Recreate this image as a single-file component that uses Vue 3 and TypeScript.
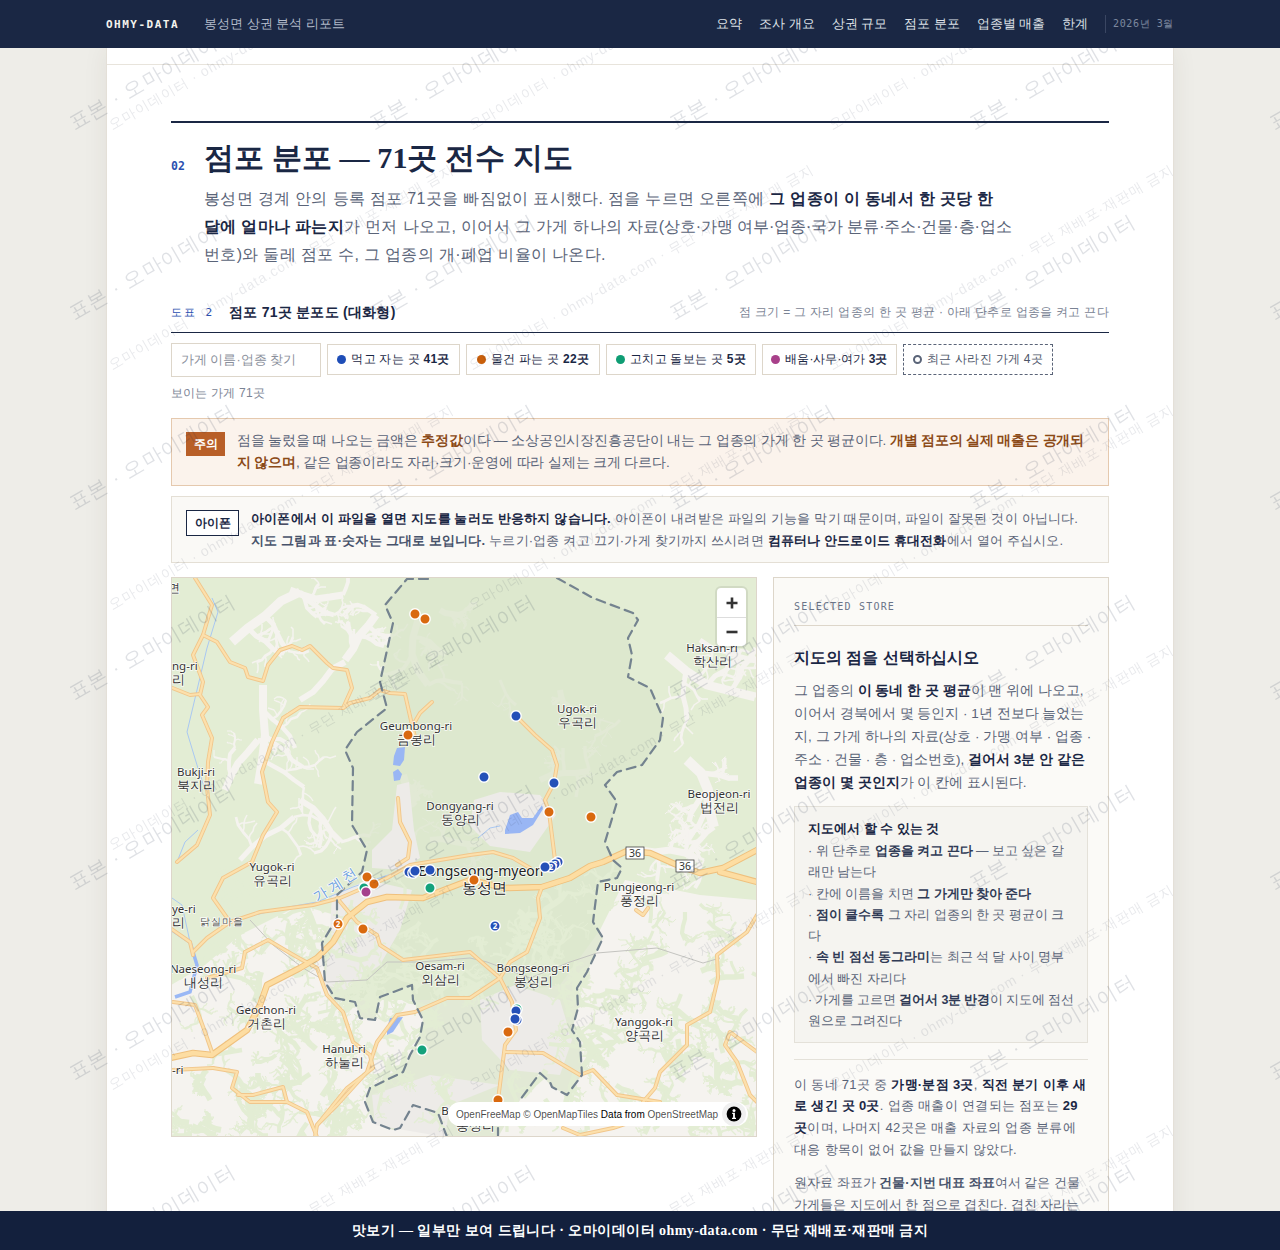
<script setup lang="ts">
interface Chip {
  label: string
  count: string
  tone: string
}

interface Label {
  x: number
  y: number
  en?: string
  ko?: string
  anchor?: string
}

interface Streak {
  d: string
  w: number
}

const navItems = ['요약', '조사 개요', '상권 규모', '점포 분포', '업종별 매출', '한계']

const chips: Chip[] = [
  { label: '먹고 자는 곳', count: '41곳', tone: 'blue' },
  { label: '물건 파는 곳', count: '22곳', tone: 'orange' },
  { label: '고치고 돌보는 곳', count: '5곳', tone: 'green' },
  { label: '배움·사무·여가', count: '3곳', tone: 'purple' }
]

// map geometry is in page pixels, the svg viewBox starts at the map's corner
const minorRoads = [
  '195,578 212,605 203,635 193,655 203,682 200,695 208,707 202,715 212,738 208,762 207,788 210,815 197,845 177,862',
  '203,635 217,642 230,662 245,668 248,677 263,681 268,665 280,650 292,646 302,650 310,646 327,663 333,668 347,670 352,688 343,708',
  '380,690 370,698 350,703 343,708 300,707 283,718 272,742 262,772 268,802 277,812 263,835 252,862 223,878 213,898 230,922',
  '380,690 390,693 405,694 412,725 415,737',
  '432,702 420,713 413,725',
  '398,798 400,822 410,842 408,858 397,865',
  '170,687 190,695 200,694',
  '193,952 207,938 230,922 260,912 313,905 340,898 387,878 410,865 470,855 493,852 513,858 530,868',
  '170,928 190,942 193,955',
  '213,1055 205,1032 195,1005 173,1002',
  '245,952 268,940 290,953 297,957 317,968 327,995 343,1012 353,1042 370,1055 373,1068 347,1088 317,1125 315,1137',
  '245,952 242,968 207,978',
  '213,1068 237,1072 232,1088 250,1102 287,1102 283,1087 253,1095 238,1095',
  '287,1102 307,1112 317,1137',
  '337,898 357,922 377,935 380,945 403,960 470,952 500,978 512,1002 516,1030 505,1045 498,1100',
  '500,978 470,998 447,998 415,1012 397,1015 377,1042 367,1072 337,1105 317,1125',
  '542,887 538,898 540,918 527,952 510,962 500,978',
  '505,1052 543,1053 580,1075 593,1070 617,1095 660,1102',
  '757,915 747,932 717,955 718,978 710,1012 687,1025 687,1045 660,1072 655,1088 643,1102',
  '757,1052 730,1032 725,1045 737,1062 750,1095 757,1102',
  '636,910 643,915 648,908',
  '563,1128 580,1135 613,1128 643,1118',
  '516,716 535,735 552,750 557,765 554,783 545,800 549,812 555,860',
  '170,1070 213,1068'
]

const majorRoads = [
  '170,1058 193,1053 212,1055 247,1030 260,1005 267,985 300,968 317,958 333,942 347,918 367,902 387,897 423,898 470,880 505,888 542,887 570,878 590,866 603,862 627,851 650,853 677,865 700,873 723,868 757,850',
  '720,872 757,882'
]

const boundaries = [
  '428,579 407,579 385,605 393,623 380,682 387,708 357,732 345,750 353,768 352,825 367,850 362,872 337,895 337,918 322,943 325,982 335,998 355,1002 360,1018 375,1020 380,997 412,985 413,1000 423,1020 420,1037 410,1055 403,1072 370,1088 365,1102 373,1122 393,1130 400,1128 413,1105 438,1113 447,1137',
  '557,578 593,598 633,613 638,620 628,638 632,655 628,677 650,688 663,718 660,740 642,765 617,772 605,785 617,802 605,842 613,860 622,868 617,878 598,882 593,922 603,938 587,972 577,988 578,1008 572,1030 580,1042 582,1075 567,1095 552,1087 550,1082 540,1073 520,1100',
  '498,1128 498,1137'
]

const interior =
  '407,577 385,605 393,623 380,682 387,708 357,732 345,750 353,768 352,825 367,850 362,872 337,895 337,918 322,943 325,982 335,998 355,1002 360,1018 375,1020 380,997 412,985 413,1000 423,1020 420,1037 410,1055 403,1072 370,1088 365,1102 373,1122 393,1130 400,1128 413,1105 438,1113 447,1137 498,1137 520,1100 540,1073 552,1087 567,1095 582,1075 580,1042 572,1030 578,1008 577,988 587,972 603,938 593,922 598,882 617,878 622,868 613,860 605,842 617,802 605,785 617,772 642,765 660,740 663,718 650,688 628,677 632,655 628,638 638,620 633,613 593,598 557,577'

const southLand =
  '171,985 205,965 240,935 300,905 335,915 345,1000 460,1000 560,985 600,930 625,880 700,895 757,900 757,1137 171,1137'

const greyLand = [
  '397,785 409,782 414,830 420,858 402,870 372,868 372,850 392,830',
  '474,800 500,792 540,795 556,815 530,852 490,846 470,826',
  '332,895 368,880 412,890 400,930 380,965 345,990 325,985 330,930',
  '480,1000 515,985 560,1000 572,1040 560,1075 510,1070 482,1040',
  '372,1095 430,1075 500,1085 450,1105 445,1137 375,1125'
]

const lakes = [
  '394,756 397,748 405,747 404,760 400,766 393,765',
  '393,772 398,769 402,774 400,780 394,781',
  '505,830 510,815 518,812 522,818 533,818 542,805 543,809 533,825 520,833 505,834',
  '387,1028 390,1018 403,1017 393,1032 387,1035'
]

const streams = [
  '212,598 218,612 207,648 187,732 197,765 205,790',
  '177,862 185,842 198,830',
  '247,917 283,908 317,902 353,887 403,870',
  '478,838 490,828 500,826',
  '172,898 182,905 190,942'
]

const placeLabels: Label[] = [
  { x: 712, y: 652, en: 'Haksan-ri', ko: '학산리' },
  { x: 577, y: 713, en: 'Ugok-ri', ko: '우곡리' },
  { x: 416, y: 730, en: 'Geumbong-ri', ko: '금봉리' },
  { x: 196, y: 776, en: 'Bukji-ri', ko: '북지리' },
  { x: 460, y: 810, en: 'Dongyang-ri', ko: '동양리' },
  { x: 719, y: 798, en: 'Beopjeon-ri', ko: '법전리' },
  { x: 272, y: 871, en: 'Yugok-ri', ko: '유곡리' },
  { x: 639, y: 891, en: 'Pungjeong-ri', ko: '풍정리' },
  { x: 203, y: 973, en: 'Naeseong-ri', ko: '내성리' },
  { x: 266, y: 1014, en: 'Geochon-ri', ko: '거촌리' },
  { x: 440, y: 970, en: 'Oesam-ri', ko: '외삼리' },
  { x: 533, y: 972, en: 'Bongseong-ri', ko: '봉성리' },
  { x: 344, y: 1053, en: 'Hanul-ri', ko: '하눌리' },
  { x: 644, y: 1026, en: 'Yanggok-ri', ko: '양곡리' },
  { x: 172, y: 670, en: 'ng-ri', ko: '리', anchor: 'start' },
  { x: 172, y: 913, en: 'ye-ri', ko: '리', anchor: 'start' },
  { x: 172, y: 1074, en: '-ri', anchor: 'start' }
]

const markers = [
  { x: 415, y: 614, c: 'orange' }, { x: 425, y: 619, c: 'orange' }, { x: 408, y: 735, c: 'orange' },
  { x: 549, y: 812, c: 'orange' }, { x: 591, y: 817, c: 'orange' }, { x: 516, y: 716, c: 'blue' },
  { x: 484, y: 777, c: 'blue' }, { x: 554, y: 783, c: 'blue' }, { x: 364, y: 888, c: 'green' },
  { x: 367, y: 877, c: 'orange' }, { x: 374, y: 884, c: 'orange' }, { x: 366, y: 892, c: 'purple' },
  { x: 338, y: 924, c: 'orange', n: '2' }, { x: 363, y: 929, c: 'orange' }, { x: 409, y: 872, c: 'blue' },
  { x: 413, y: 873, c: 'blue' }, { x: 415, y: 871, c: 'blue' }, { x: 430, y: 870, c: 'blue' },
  { x: 430, y: 888, c: 'green' }, { x: 474, y: 880, c: 'orange' }, { x: 558, y: 862, c: 'blue', n: '2' },
  { x: 555, y: 864, c: 'blue', n: '3' }, { x: 551, y: 867, c: 'blue', n: '2' }, { x: 545, y: 867, c: 'blue' },
  { x: 495, y: 926, c: 'blue', n: '2' }, { x: 517, y: 1009, c: 'green' }, { x: 516, y: 1011, c: 'blue' },
  { x: 517, y: 1020, c: 'blue' }, { x: 515, y: 1019, c: 'blue' }, { x: 508, y: 1032, c: 'orange' },
  { x: 422, y: 1050, c: 'green' }, { x: 498, y: 1100, c: 'orange' }
]

function makeRandom(seed: number) {
  let s = seed
  return () => {
    s = (s + 0x6d2b79f5) | 0
    let t = Math.imul(s ^ (s >>> 15), 1 | s)
    t = (t + Math.imul(t ^ (t >>> 7), 61 | t)) ^ t
    return ((t ^ (t >>> 14)) >>> 0) / 4294967296
  }
}

// the valleys and forest patches branch the way the terrain layer does
function grow(
  rand: () => number, out: Streak[], x: number, y: number, a: number, len: number, w: number
) {
  let px = x
  let py = y
  let d = `M${x.toFixed(0)} ${y.toFixed(0)}`
  const steps = 4
  for (let i = 0; i < steps; i++) {
    a += (rand() - 0.5) * 0.9
    px += Math.cos(a) * (len / steps)
    py += Math.sin(a) * (len / steps)
    d += `L${px.toFixed(0)} ${py.toFixed(0)}`
    if (w > 1.6 && rand() > 0.3) {
      const side = rand() > 0.5 ? 1 : -1
      grow(rand, out, px, py, a + side * (0.7 + rand() * 0.7), len * 0.5, w * 0.55)
    }
  }
  out.push({ d, w: Math.max(1, w) })
}

function northValleys(): Streak[] {
  const rand = makeRandom(11)
  const out: Streak[] = []
  const roots = [
    [232, 642, -0.7, 85, 9], [290, 590, 0.5, 55, 7], [263, 685, 2.0, 100, 8], [345, 660, -0.9, 55, 8],
    [300, 700, -0.2, 60, 6], [225, 790, -1.0, 60, 7], [300, 800, 0.8, 60, 6], [240, 860, -0.4, 70, 5],
    [667, 655, 0.5, 100, 9], [687, 760, 0.4, 75, 10], [640, 850, -0.2, 60, 7], [700, 640, 0.3, 60, 5],
    [420, 640, 0.2, 30, 5], [440, 610, 0.3, 25, 6], [560, 690, 1.7, 25, 6], [540, 780, -0.4, 50, 6],
    [430, 840, -0.3, 50, 6], [620, 720, 1.9, 30, 3], [500, 680, 1.0, 30, 3], [390, 860, -0.8, 40, 3],
    [418, 620, 1.55, 70, 7], [403, 775, 1.55, 30, 8]
  ]
  for (const [x, y, a, len, w] of roots) grow(rand, out, x, y, a, len, w)
  return out
}

function southForest(): Streak[] {
  const rand = makeRandom(29)
  const out: Streak[] = []
  for (let i = 0; i < 230; i++) {
    const x = 171 + rand() * 586
    const y = 900 + rand() * 237
    if (x > 470 && x < 570 && y > 985 && y < 1070) continue
    if (x > 372 && x < 447 && y > 1085) continue
    grow(rand, out, x, y, rand() * 6.28, 16 + rand() * 22, 3 + rand() * 3.5)
  }
  return out
}

const valleys = northValleys()
const forest = southForest()

const notes = [
  { id: 'a', plain: ' 위 단추로 ', bold: '업종을 켜고 끈다', tail: ' — 보고 싶은 갈래만 남는다' },
  { id: 'b', plain: ' 칸에 이름을 치면 ', bold: '그 가게만 찾아 준다', tail: '' },
  { id: 'c', plain: ' ', bold: '점이 클수록', tail: ' 그 자리 업종의 한 곳 평균이 크다' },
  { id: 'd', plain: ' ', bold: '속 빈 점선 동그라미', tail: '는 최근 석 달 사이 명부에서 빠진 자리다' },
  { id: 'e', plain: ' 가게를 고르면 ', bold: '걸어서 3분 반경', tail: '이 지도에 점선 원으로 그려진다' }
]
</script>

<template>
  <div class="page">
    <header class="topbar">
      <div class="topbar-inner">
        <div class="brand">
          <span class="logo">OHMY-DATA</span>
          <span class="report">봉성면 상권 분석 리포트</span>
        </div>
        <nav class="nav">
          <a v-for="item in navItems" :key="item">{{ item }}</a>
          <span class="date">2026년 3월</span>
        </nav>
      </div>
    </header>

    <main class="sheet">
      <div class="sheet-top"></div>
      <section class="section">
        <div class="section-head">
          <span class="section-no">02</span>
          <h2>점포 분포 — 71곳 전수 지도</h2>
        </div>
        <p class="lead">
          봉성면 경계 안의 등록 점포 71곳을 빠짐없이 표시했다. 점을 누르면 오른쪽에
          <strong>그 업종이 이 동네서 한 곳당 한 달에 얼마나 파는지</strong>가 먼저 나오고, 이어서 그 가게 하나의
          <span class="tight">자료(상호·가맹 여부·업종·국가 분류·주소·건물·층·업소</span>번호)와 둘레 점포 수, 그 업종의 개·폐업 비율이 나온다.
        </p>

        <div class="figure-cap">
          <span class="figure-no">도표 2</span>
          <strong>점포 71곳 분포도 (대화형)</strong>
          <span class="figure-note">점 크기 = 그 자리 업종의 한 곳 평균 · 아래 단추로 업종을 켜고 끈다</span>
        </div>

        <div class="controls">
          <input class="search" type="text" placeholder="가게 이름·업종 찾기" />
          <button v-for="chip in chips" :key="chip.tone" class="chip" type="button">
            <i class="dot" :class="chip.tone"></i>
            <span>{{ chip.label }} <b>{{ chip.count }}</b></span>
          </button>
          <button class="chip chip-closed" type="button">
            <i class="ring"></i>
            <span>최근 사라진 가게 4곳</span>
          </button>
        </div>
        <p class="visible">보이는 가게 71곳</p>

        <div class="notice notice-warn">
          <span class="tag tag-warn">주의</span>
          <p>
            점을 눌렀을 때 나오는 금액은 <em>추정값</em>이다 — 소상공인시장진흥공단이 내는 그 업종의 가게 한 곳 평균이다.
            <em>개별 점포의 실제 매출은 공개되지 않으며</em>, 같은 업종이라도 자리·크기·운영에 따라 실제는 크게 다르다.
          </p>
        </div>

        <div class="notice notice-phone">
          <span class="tag tag-phone">아이폰</span>
          <p>
            <strong>아이폰에서 이 파일을 열면 지도를 눌러도 반응하지 않습니다.</strong>
            아이폰이 내려받은 파일의 기능을 막기 때문이며, 파일이 잘못된 것이 아닙니다.
            <strong class="mid">지도 그림과 표·숫자는 그대로 보입니다.</strong>
            누르기·업종 켜고 끄기·가게 찾기까지 쓰시려면 <strong>컴퓨터나 안드로이드 휴대전화</strong>에서 열어 주십시오.
          </p>
        </div>

        <div class="map-row">
          <div class="map">
            <svg class="map-svg" viewBox="171 577 586 560" width="586" height="560">
              <rect x="171" y="577" width="586" height="560" fill="#e3edd4" />
              <polygon :points="southLand" fill="#f5f3ef" />
              <path
                v-for="(s, i) in valleys" :key="'v' + i" :d="s.d" :stroke-width="s.w"
                fill="none" stroke="#f5f3ef" stroke-linejoin="bevel"
              />
              <polygon :points="interior" fill="#dbe5cc" fill-opacity="0.75" />
              <polygon v-for="g in greyLand" :key="g" :points="g" fill="#edebe8" />
              <path
                v-for="(s, i) in forest" :key="'f' + i" :d="s.d" :stroke-width="s.w"
                fill="none" stroke="#e3edd4" stroke-linejoin="bevel"
              />
              <polyline
                points="250,920 273,945 303,968 327,982 367,980 387,962 420,962 470,958 487,962 530,978 570,962 597,953 657,948 703,963 720,958"
                fill="none" stroke="#c4c4c0" stroke-width="1"
              />
              <polyline v-for="s in streams" :key="s" :points="s" fill="none" stroke="#a9c8f2" stroke-width="1" />
              <polyline points="172,930 190,942 197,965 190,992 175,997" fill="none" stroke="#9ab8f5" stroke-width="3.5" />
              <polygon v-for="l in lakes" :key="l" :points="l" fill="#99b6f4" />
              <g fill="none" stroke-linejoin="round" stroke-linecap="round">
                <polyline v-for="r in minorRoads" :key="r" :points="r" stroke="#f1c68b" stroke-width="4" />
                <polyline v-for="r in majorRoads" :key="r" :points="r" stroke="#efc07d" stroke-width="6.5" />
                <polyline v-for="r in minorRoads" :key="'i' + r" :points="r" stroke="#fce0ac" stroke-width="2.2" />
                <polyline v-for="r in majorRoads" :key="'i' + r" :points="r" stroke="#fddda2" stroke-width="4.5" />
                <polyline
                  v-for="b in boundaries" :key="b" :points="b" stroke="#74838f"
                  stroke-width="2.2" stroke-dasharray="9 6"
                />
              </g>

              <g class="place">
                <text v-for="p in placeLabels" :key="p.x + '-' + p.y" :x="p.x" :y="p.y" :text-anchor="p.anchor || 'middle'">
                  <tspan :x="p.x">{{ p.en }}</tspan>
                  <tspan v-if="p.ko" class="ko" :x="p.x" dy="14">{{ p.ko }}</tspan>
                </text>
                <text x="168" y="592" text-anchor="start">면</text>
                <text x="445" y="1115" text-anchor="middle">B</text>
                <text class="ko" x="475" y="1130" text-anchor="middle">봉성리</text>
              </g>
              <text class="place town" x="481" y="876" text-anchor="middle">
                <tspan x="481">Bongseong-myeon</tspan>
                <tspan class="ko" x="484" dy="17">봉성면</tspan>
              </text>
              <text class="place hamlet" x="222" y="925" text-anchor="middle">닭실마을</text>
              <text class="place stream" transform="translate(339 888) rotate(-32)" text-anchor="middle">가계천</text>

              <g v-for="s in [{ x: 635, y: 853 }, { x: 685, y: 866 }]" :key="s.x">
                <rect :x="s.x - 9" :y="s.y - 6" width="18" height="12" fill="#fff" stroke="#444" stroke-width="0.8" />
                <text class="shield" :x="s.x" :y="s.y + 4" text-anchor="middle">36</text>
              </g>

              <g v-for="(m, i) in markers" :key="'m' + i">
                <circle class="pin" :class="m.c" :cx="m.x" :cy="m.y" r="5.2" />
                <text v-if="m.n" class="pin-no" :x="m.x" :y="m.y + 3" text-anchor="middle">{{ m.n }}</text>
              </g>
            </svg>

            <div class="zoom">
              <button type="button" aria-label="확대">
                <svg viewBox="0 0 14 14" width="14" height="14"><path d="M7 1.5v11M1.5 7h11" stroke="#333" stroke-width="2.6" /></svg>
              </button>
              <button type="button" aria-label="축소">
                <svg viewBox="0 0 14 14" width="14" height="14"><path d="M1.5 7h11" stroke="#333" stroke-width="2.6" /></svg>
              </button>
            </div>
            <div class="attrib">
              <span>OpenFreeMap © OpenMapTiles <b>Data from</b> OpenStreetMap</span>
              <span class="info">
                <svg viewBox="0 0 16 16" width="16" height="16">
                  <circle cx="8" cy="8" r="7.4" fill="#000" />
                  <circle cx="8" cy="4.4" r="1.5" fill="#fff" />
                  <path d="M6.2 6.8h2.7v5h1.1v1.2H6v-1.2h1.1V8H6.2z" fill="#fff" />
                </svg>
              </span>
            </div>
          </div>

          <aside class="store">
            <div class="store-kicker">SELECTED STORE</div>
            <h3>지도의 점을 선택하십시오</h3>
            <p class="store-lead">
              그 업종의 <strong>이 동네 한 곳 평균</strong>이 맨 위에 나오고, 이어서 경북에서 몇 등인지 · 1년 전보다 늘었는지, 그 가게 하나의
              자료(상호 · 가맹 여부 · 업종 · 주소 · 건물 · 층 · 업소번호), <strong>걸어서 3분 안 같은 업종이 몇 곳인지</strong>가 이 칸에 표시된다.
            </p>
            <div class="howto">
              <h4>지도에서 할 수 있는 것</h4>
              <div v-for="n in notes" :key="n.id" class="howto-line">
                ·{{ n.plain }}<strong>{{ n.bold }}</strong>{{ n.tail }}
              </div>
            </div>
            <div class="store-foot">
              <p>
                이 동네 71곳 중 <strong>가맹·분점 3곳</strong>, <strong>직전 분기 이후 새로 생긴 곳 0곳</strong>. 업종 매출이 연결되는 점포는
                <strong>29곳</strong>이며, 나머지 42곳은 매출 자료의 업종 분류에 대응 항목이 없어 값을 만들지 않았다.
              </p>
              <p class="store-coords">
                원자료 좌표가 <strong class="mid">건물·지번 대표 좌표</strong>여서 같은 건물 가게들은 지도에서 한 점으로 겹친다. 겹친 자리는 숫자로 표시했다.
              </p>
            </div>
          </aside>
        </div>
      </section>
    </main>

    <svg class="watermark" width="1280" height="1250" aria-hidden="true">
      <defs>
        <pattern id="wm-a" x="70" y="-30" width="300" height="190" patternUnits="userSpaceOnUse">
          <text class="wm-big" transform="translate(4 160) rotate(-30)">표본 · 오마이데이터</text>
        </pattern>
        <pattern id="wm-b" x="107" y="-85" width="360" height="240" patternUnits="userSpaceOnUse">
          <text class="wm-small" transform="translate(5 215) rotate(-30)">오마이데이터 · ohmy-data.com · 무단 재배포·재판매 금지</text>
        </pattern>
      </defs>
      <rect width="1280" height="1250" fill="url(#wm-a)" />
      <rect x="107" width="1066" height="1250" fill="url(#wm-b)" />
    </svg>

    <footer class="preview-bar">맛보기 — 일부만 보여 드립니다 · 오마이데이터 ohmy-data.com · 무단 재배포·재판매 금지</footer>
  </div>
</template>

<style>
html,
body {
  margin: 0;
  background: #eeede8;
}
</style>

<style scoped>
.page {
  height: 100vh;
  overflow: hidden;
  font-family: "Liberation Sans", sans-serif;
  color: #5a6478;
}

.topbar {
  position: relative;
  z-index: 5;
  height: 48px;
  background: #1a2744;
}

.topbar-inner {
  width: 1068px;
  height: 100%;
  margin: 0 auto;
  display: flex;
  align-items: center;
  justify-content: space-between;
}

.brand {
  display: flex;
  align-items: center;
  gap: 25px;
}

.logo {
  font: 700 11px "DejaVu Sans Mono", monospace;
  letter-spacing: 1.5px;
  color: #f4f3ee;
}

.report {
  font-size: 13px;
  color: #b4bccb;
}

.nav {
  display: flex;
  align-items: center;
  gap: 17px;
  font-size: 12.5px;
  color: #dfe2e8;
}

.date {
  border-left: 1px solid #3a4662;
  padding: 2px 0 2px 7px;
  font: 10px "DejaVu Sans Mono", monospace;
  letter-spacing: 0.6px;
  color: #7d899f;
}

.sheet {
  width: 1066px;
  height: 1202px;
  margin: 0 auto;
  background: #fff;
  box-shadow: 0 0 0 1px #e4e0d8, 0 0 24px rgba(60, 55, 40, 0.08);
}

.sheet-top {
  height: 16px;
  border-bottom: 1px solid #e8e4dc;
}

.section {
  margin: 56px 64px 0;
  border-top: 2px solid #1a2744;
}

.section-head {
  display: flex;
  align-items: flex-end;
  margin-top: 14px;
}

.section-no {
  width: 33px;
  padding-bottom: 6px;
  font: 700 11.5px "DejaVu Sans Mono", monospace;
  color: #2b50b0;
}

h2 {
  margin: 0;
  font: 700 30px/42px "Liberation Serif", serif;
  letter-spacing: 0.1px;
  color: #1a2744;
}

.lead {
  margin: 6px 0 0 33px;
  width: 808px;
  font-size: 16px;
  line-height: 28px;
  letter-spacing: 0.32px;
}

.tight {
  letter-spacing: -0.1px;
}

strong {
  font-weight: 700;
  color: #1a2744;
}

.figure-cap {
  display: flex;
  align-items: center;
  margin-top: 33px;
  padding-bottom: 10px;
  border-bottom: 1px solid #1a2744;
  font-size: 14px;
  line-height: 20px;
}

.figure-cap strong {
  letter-spacing: 0.25px;
}

.figure-no {
  width: 58px;
  font: 11px "DejaVu Sans Mono", monospace;
  letter-spacing: 2px;
  color: #2b50b0;
}

.figure-note {
  margin-left: auto;
  font-size: 12px;
  letter-spacing: 0.3px;
  color: #7a8394;
}

.controls {
  display: flex;
  align-items: flex-start;
  gap: 6px;
  margin-top: 10px;
}

.search {
  box-sizing: border-box;
  flex: none;
  width: 150px;
  height: 34px;
  padding: 0 9px;
  border: 1px solid #ddd6ca;
  background: #fff;
  font: 12.5px "Liberation Sans", sans-serif;
  outline: none;
}

.search::placeholder {
  color: #8a8f9b;
}

.chip {
  box-sizing: border-box;
  flex: none;
  display: flex;
  align-items: center;
  justify-content: center;
  gap: 5px;
  height: 31px;
  margin-top: 1px;
  padding: 0;
  border: 1px solid #ddd6ca;
  background: #fff;
  font: 12px "Liberation Sans", sans-serif;
  letter-spacing: 0.26px;
  color: #1a2744;
}

.chip:nth-child(2) {
  width: 133px;
}

.chip:nth-child(3) {
  width: 134px;
}

.chip:nth-child(4) {
  width: 150px;
}

.chip:nth-child(5) {
  width: 135px;
}

.chip:nth-child(5) span {
  letter-spacing: 0;
}

.chip:nth-child(6) {
  width: 150px;
}

.chip b {
  font-weight: 700;
}

.dot {
  width: 9px;
  height: 9px;
  border-radius: 50%;
}

.dot.blue {
  background: #1e4db7;
}

.dot.orange {
  background: #c95f0a;
}

.dot.green {
  background: #0f9d74;
}

.dot.purple {
  background: #a8408a;
}

.chip-closed {
  border: 1px dashed #5a6478;
  color: #4d5669;
}

.ring {
  box-sizing: border-box;
  width: 9px;
  height: 9px;
  border: 2px solid #5a6478;
  border-radius: 50%;
}

.visible {
  margin: 7px 0 0;
  font-size: 12px;
  line-height: 18px;
  letter-spacing: 0.2px;
  color: #7a8394;
}

.notice {
  box-sizing: border-box;
  display: flex;
  align-items: flex-start;
  gap: 12px;
  padding: 12px 14px;
  font-size: 13px;
  line-height: 22px;
}

.notice p {
  margin: -1px 0 0;
}

.notice-warn {
  height: 68px;
  margin-top: 16px;
  border: 1px solid #e5c9ae;
  background: #fbf3ec;
  font-size: 13.5px;
  letter-spacing: -0.15px;
}

.notice-warn em {
  font-style: normal;
  font-weight: 700;
  color: #8b4a17;
}

.notice-phone {
  height: 67px;
  margin-top: 10px;
  border: 1px solid #e4dfd5;
  background: #faf9f6;
  letter-spacing: 0.18px;
}

.tag {
  flex: none;
  font-size: 12px;
  letter-spacing: 0;
  text-align: center;
}

.tag-warn {
  width: 39px;
  margin-top: 1px;
  line-height: 24px;
  background: #b85f28;
  color: #fff;
  font-weight: 700;
}

.tag-phone {
  box-sizing: border-box;
  width: 53px;
  margin-top: 1px;
  line-height: 24px;
  border: 1px solid #1a2744;
  background: #fff;
  color: #1a2744;
  font-weight: 700;
}

strong.mid {
  color: #47526a;
}

.map-row {
  display: flex;
  align-items: flex-start;
  gap: 16px;
  margin-top: 14px;
}

.map {
  position: relative;
  box-sizing: border-box;
  flex: none;
  width: 586px;
  height: 560px;
  border: 1px solid #ddd6ca;
  overflow: hidden;
}

.map-svg {
  display: block;
  margin: -1px;
}

.place {
  font: 11.5px "Noto Sans", sans-serif;
  fill: #333;
  paint-order: stroke;
  stroke: rgba(255, 255, 255, 0.85);
  stroke-width: 1.6px;
}

.place .ko,
.place.town {
  font-size: 13px;
}

.place.town {
  font-size: 14px;
  fill: #222;
}

.place.town .ko {
  font-size: 15px;
}

.place.hamlet {
  font-size: 10px;
  letter-spacing: 1px;
  fill: #555;
}

.place.stream {
  font-size: 14px;
  letter-spacing: 3px;
  fill: #6da0e0;
}

.shield {
  font: 10.5px "Noto Sans", sans-serif;
  fill: #333;
}

.pin {
  stroke: #fff;
  stroke-width: 1.4;
}

.pin.blue {
  fill: #2450b8;
}

.pin.orange {
  fill: #d9690f;
}

.pin.green {
  fill: #14a27c;
}

.pin.purple {
  fill: #a5408c;
}

.pin-no {
  font: 700 8px "Noto Sans", sans-serif;
  fill: #fff;
}

.zoom {
  position: absolute;
  top: 10px;
  right: 10px;
  display: flex;
  flex-direction: column;
  width: 29px;
  border-radius: 4px;
  background: #fff;
  box-shadow: 0 0 0 2px rgba(0, 0, 0, 0.08);
}

.zoom button {
  display: flex;
  align-items: center;
  justify-content: center;
  height: 29px;
  padding: 0;
  border: 0;
  background: none;
}

.zoom button + button {
  border-top: 1px solid #ddd;
}

.attrib {
  position: absolute;
  left: 276px;
  bottom: 10px;
  display: flex;
  align-items: center;
  height: 24px;
  width: 300px;
  box-sizing: border-box;
  padding-left: 8px;
  border-radius: 12px;
  background: #fff;
  font: 10px "Liberation Sans", sans-serif;
  color: rgba(0, 0, 0, 0.72);
}

.attrib b {
  font-weight: 400;
  color: #000;
}

.info {
  position: absolute;
  right: 2px;
  top: 0;
  display: flex;
  align-items: center;
  justify-content: center;
  width: 24px;
  height: 24px;
  border-radius: 50%;
  background: #f0f0f0;
}

.store {
  box-sizing: border-box;
  flex: none;
  width: 336px;
  padding: 23px 20px 20px;
  border: 1px solid #ddd6ca;
  background: #fbfaf7;
}

.store-kicker {
  padding-bottom: 13px;
  border-bottom: 1px solid #ddd6ca;
  font: 10px "DejaVu Sans Mono", monospace;
  letter-spacing: 1.2px;
  color: #6a7488;
}

h3 {
  margin: 20px 0 0;
  font-size: 15.65px;
  line-height: 24px;
  font-weight: 700;
  color: #1a2744;
}

.store-lead {
  margin: 9px -6px 0 0;
  font-size: 13.5px;
  line-height: 23px;
}

.howto {
  margin-top: 12px;
  padding: 11px 11px 9px 13px;
  border: 1px solid #e4e1d9;
  background: #f5f4f0;
  font-size: 12.5px;
  line-height: 21.3px;
}

h4 {
  margin: 0 0 2px;
  font-size: 13px;
  line-height: 21px;
  font-weight: 700;
  color: #1a2744;
}

.howto-line strong {
  color: #2f3a55;
}

.howto-line:last-child {
  letter-spacing: -0.12px;
}

.store-foot {
  margin-top: 16px;
  padding-top: 14px;
  border-top: 1px solid #e4e1d9;
  font-size: 13px;
  line-height: 21.7px;
  letter-spacing: 0.3px;
}

.store-foot p {
  margin: 0 0 12px;
}

.store-foot .store-coords {
  letter-spacing: 0;
}

.watermark {
  position: fixed;
  inset: 0;
  z-index: 3;
  pointer-events: none;
}

.wm-big {
  font: 20px "Liberation Sans", sans-serif;
  letter-spacing: 1px;
  fill: rgba(26, 39, 68, 0.14);
}

.wm-small {
  font: 14px "Liberation Sans", sans-serif;
  letter-spacing: 1px;
  fill: rgba(26, 39, 68, 0.1);
}

.preview-bar {
  position: fixed;
  left: 0;
  right: 0;
  bottom: 0;
  z-index: 5;
  height: 39px;
  background: #13203d;
  color: #fff;
  text-align: center;
  font: 700 14px/39px "Liberation Serif", serif;
  letter-spacing: 0.45px;
}
</style>
